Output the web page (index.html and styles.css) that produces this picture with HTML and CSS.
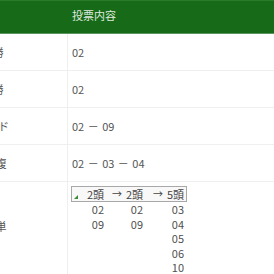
FILE: index.html
```html
<!DOCTYPE html>
<html lang="ja">
<head>
<meta charset="utf-8">
<link rel="stylesheet" href="styles.css">
</head>
<body>
<div class="table">
  <div class="row head">
    <div class="label"></div>
    <div class="value">投票内容</div>
  </div>
  <div class="row">
    <div class="label">単勝</div>
    <div class="value">02</div>
  </div>
  <div class="row">
    <div class="label">複勝</div>
    <div class="value">02</div>
  </div>
  <div class="row">
    <div class="label">ワイド</div>
    <div class="value seq">02 － 09</div>
  </div>
  <div class="row">
    <div class="label">3連複</div>
    <div class="value seq">02 － 03 － 04</div>
  </div>
  <div class="row last">
    <div class="label">3連単</div>
    <div class="value">
      <div class="formation">
        <div class="f-head">
          <span class="tri"></span>
          <div class="fc c1">2頭</div>
          <div class="fa a1"><span>→</span></div>
          <div class="fc c2">2頭</div>
          <div class="fa a2"><span>→</span></div>
          <div class="fc c3">5頭</div>
        </div>
        <div class="f-body">
          <div class="fc c1"><div>02</div><div>09</div></div>
          <div></div>
          <div class="fc c2"><div>02</div><div>09</div></div>
          <div></div>
          <div class="fc c3"><div>03</div><div>04</div><div>05</div><div>06</div><div>10</div></div>
        </div>
      </div>
    </div>
  </div>
</div>
</body>
</html>
```
FILE: styles.css
```css
html, body {
  margin: 0;
  padding: 0;
  background: #fff;
}
body {
  font-family: "Noto Sans CJK JP", "Noto Sans", sans-serif;
  font-size: 11px;
  color: #555;
  overflow: hidden;
}
.table {
  margin-left: -86px;
  width: 400px;
}
.row {
  display: flex;
  height: 36px;
  border-bottom: 1px solid #efefef;
}
.row .label {
  width: 154px;
  box-sizing: border-box;
  padding-left: 4px;
  border-right: 1px solid #efefef;
  display: flex;
  align-items: center;
  justify-content: center;
  white-space: nowrap;
}
.row .value {
  flex: 1;
  padding-left: 4px;
  display: flex;
  align-items: center;
  white-space: nowrap;
}
.row .value.seq {
  word-spacing: 1px;
}
.row.head {
  height: 32px;
  background: #176a17;
  border-top: 1px solid #2a7a2a;
  border-bottom: 1px solid #5b955b;
  color: #dfe9df;
}
.row.head .label,
.row.head .value {
  border-right: none;
  align-items: flex-start;
  padding-top: 7px;
  line-height: 14px;
}
.row.last {
  height: auto;
  border-bottom: none;
}
.row.last .label {
  padding-bottom: 9px;
}
.row.last .value {
  padding-top: 4px;
  padding-bottom: 4px;
  padding-left: 3px;
  align-items: flex-start;
}
.formation {
  color: #505050;
}
.f-head,
.f-body {
  display: grid;
  grid-template-columns: 34px 19px 20px 21px 20px;
}
.f-head {
  position: relative;
  border: 1px solid #a8a8a8;
  background: #f8f8f8;
  line-height: 14px;
  color: #444;
}
.f-body {
  margin-left: 1px;
  line-height: 14.5px;
}
.fc {
  text-align: right;
  padding-right: 2px;
  white-space: nowrap;
}
.fa {
  display: flex;
  justify-content: center;
  white-space: nowrap;
  font-size: 10px;
}
.fa.a1 { padding-left: 3px; }
.fa.a2 { padding-left: 5px; }
.tri {
  position: absolute;
  left: 2px;
  bottom: 2px;
  width: 0;
  height: 0;
  border-left: 4px solid transparent;
  border-bottom: 4px solid #3a8a3a;
}
```
